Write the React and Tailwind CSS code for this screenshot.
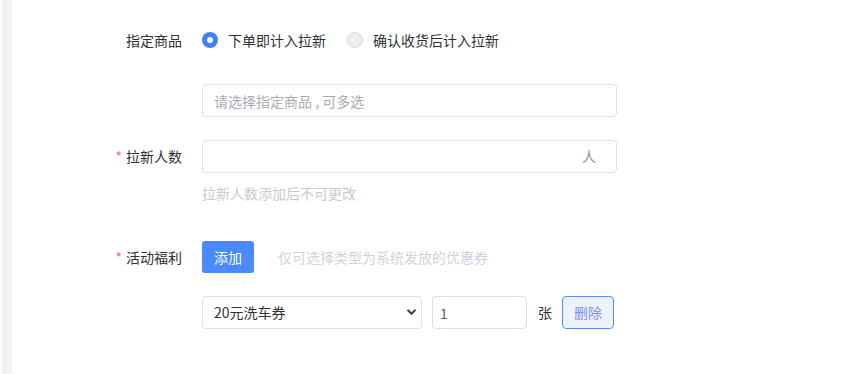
import React, { useState } from "react";

const font = { fontFamily: '"Noto Sans CJK SC", "Noto Sans", sans-serif' };

function Label({ required, children }) {
  return (
    <div className="w-[190px] shrink-0 pr-[20px] flex items-center justify-end text-[14px] text-[#303133]">
      {required && <span className="text-[#f56c6c] mr-[4px]">*</span>}
      <span>{children}</span>
    </div>
  );
}

function Radio({ checked, label, onClick }) {
  return (
    <label className="flex items-center cursor-pointer" onClick={onClick}>
      <span
        className={
          checked
            ? "w-[16px] h-[16px] rounded-full bg-[#4080ff] flex items-center justify-center"
            : "w-[16px] h-[16px] rounded-full bg-[#eceef2] border border-[#d6d9e0]"
        }
      >
        {checked && <span className="w-[6px] h-[6px] rounded-full bg-white" />}
      </span>
      <span className="ml-[10px] text-[14px] text-[#303133]">{label}</span>
    </label>
  );
}

export default function App() {
  const [mode, setMode] = useState("order");
  const [count, setCount] = useState("");
  const [qty, setQty] = useState("1");

  return (
    <div className="flex w-[843px] h-[374px] bg-white overflow-hidden" style={font}>
      <div className="ml-[2px] w-[10px] h-full bg-[#f0f3f4]" />
      <div className="flex flex-col pt-[24px]">
        <div className="flex h-[32px]">
          <Label>指定商品</Label>
          <div className="flex items-center gap-[21px]">
            <Radio checked={mode === "order"} label="下单即计入拉新" onClick={() => setMode("order")} />
            <Radio checked={mode === "receive"} label="确认收货后计入拉新" onClick={() => setMode("receive")} />
          </div>
        </div>

        <div className="flex h-[32px] mt-[28px]">
          <div className="w-[190px] shrink-0" />
          <input
            className="w-[415px] h-[33px] border border-[#dcdfe6] rounded-[4px] px-[11px] text-[14px] text-[#606266] placeholder-[#a8abb2] outline-none"
            placeholder="请选择指定商品 , 可多选"
          />
        </div>

        <div className="flex h-[32px] mt-[24px]">
          <Label required>拉新人数</Label>
          <div className="w-[415px] h-[33px] border border-[#dcdfe6] rounded-[4px] flex items-center pl-[11px] pr-[20px]">
            <input
              className="flex-1 text-[14px] text-[#606266] outline-none"
              value={count}
              onChange={(e) => setCount(e.target.value)}
            />
            <span className="text-[14px] text-[#909399]">人</span>
          </div>
        </div>
        <div className="flex mt-[11px]">
          <div className="w-[190px] shrink-0" />
          <span className="text-[14px] leading-[20px] text-[#c6cad4]">拉新人数添加后不可更改</span>
        </div>

        <div className="flex h-[32px] mt-[38px]">
          <Label required>活动福利</Label>
          <div className="flex items-center">
            <button className="w-[52px] h-[32px] rounded-[3px] bg-[#4a89ff] text-white text-[14px]">添加</button>
            <span className="ml-[24px] text-[14px] text-[#cfd3dc]">仅可选择类型为系统发放的优惠券</span>
          </div>
        </div>

        <div className="flex h-[33px] mt-[23px]">
          <div className="w-[190px] shrink-0" />
          <div className="flex items-center">
            <div className="relative w-[220px] h-[33px]">
              <select className="appearance-none w-full h-full border border-[#dcdfe6] rounded-[4px] pl-[11px] pr-[28px] text-[14px] text-[#303133] bg-white outline-none">
                <option>20元洗车券</option>
                <option>50元洗车券</option>
              </select>
              <svg className="absolute right-[5px] top-[12px] pointer-events-none" width="11" height="8" viewBox="0 0 11 8">
                <path d="M1.5 1.8 L5.5 5.8 L9.5 1.8" fill="none" stroke="#444" strokeWidth="2" />
              </svg>
            </div>
            <input
              className="ml-[10px] w-[95px] h-[33px] border border-[#dcdfe6] rounded-[4px] px-[7px] text-[14px] text-[#606266] outline-none"
              value={qty}
              onChange={(e) => setQty(e.target.value)}
            />
            <span className="ml-[11px] text-[14px] text-[#303133]">张</span>
            <button className="ml-[10px] w-[52px] h-[33px] rounded-[4px] border border-[#5b8ef5] bg-[#ecf3ff] text-[14px] text-[#7f8ef2]">删除</button>
          </div>
        </div>
      </div>
    </div>
  );
}
